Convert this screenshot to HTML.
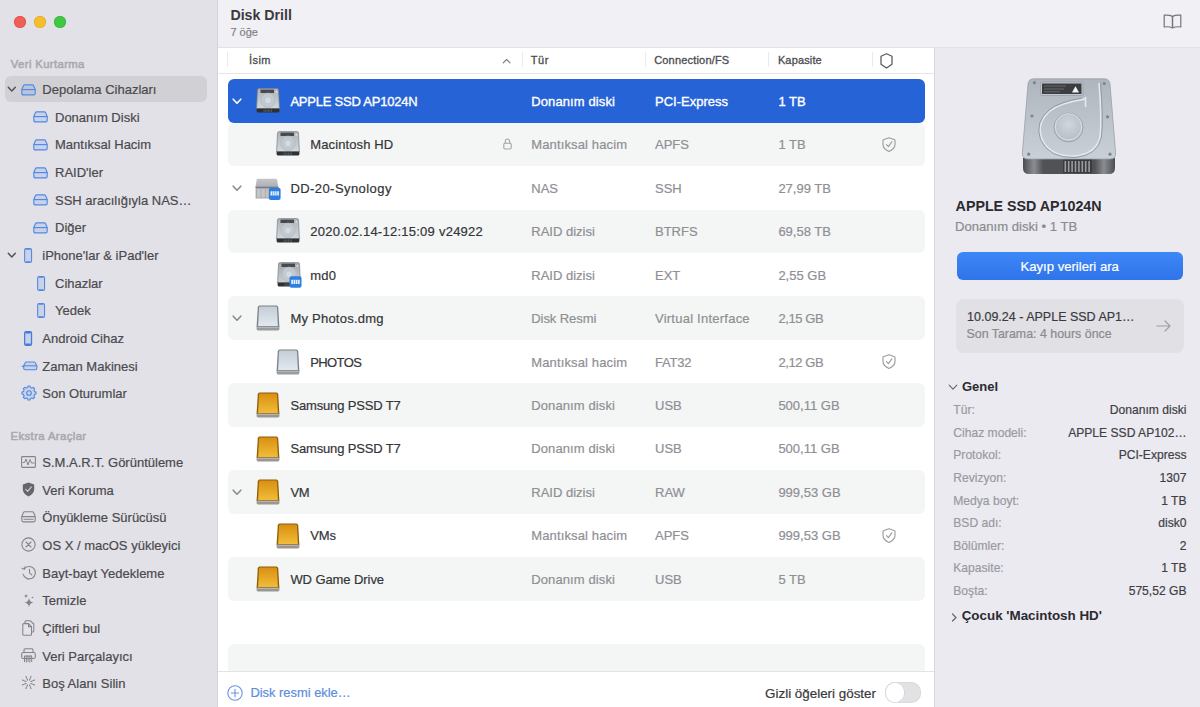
<!DOCTYPE html>
<html><head><meta charset="utf-8"><style>
html,body{margin:0;padding:0}
body{width:1200px;height:707px;overflow:hidden;position:relative;font-family:"Liberation Sans",sans-serif;background:#fff}
.t{position:absolute;white-space:nowrap;line-height:20px}
.r{-webkit-text-stroke:0.2px currentColor}
svg{overflow:visible}
</style></head><body>
<div style="position:absolute;left:0px;top:0px;width:217px;height:707px;background:#e2e1e7"></div>
<div style="position:absolute;left:217px;top:0px;width:1px;height:707px;background:#d3d2d7"></div>
<div style="position:absolute;left:218px;top:0px;width:982px;height:47px;background:#f1f0f5"></div>
<div style="position:absolute;left:218px;top:47px;width:982px;height:1px;background:#e2e1e5"></div>
<div style="position:absolute;left:218px;top:48px;width:716px;height:659px;background:#ffffff"></div>
<div style="position:absolute;left:935px;top:48px;width:265px;height:659px;background:#ebeaf1"></div>
<div style="position:absolute;left:934px;top:48px;width:1px;height:659px;background:#d9d8de"></div>
<div style="position:absolute;left:14px;top:15.5px;width:12px;height:12px;border-radius:50%;background:#ee5f58;box-shadow:inset 0 0 0 0.5px #d8483f"></div>
<div style="position:absolute;left:34px;top:15.5px;width:12px;height:12px;border-radius:50%;background:#f5be2f;box-shadow:inset 0 0 0 0.5px #d9a31f"></div>
<div style="position:absolute;left:54px;top:15.5px;width:12px;height:12px;border-radius:50%;background:#3fc840;box-shadow:inset 0 0 0 0.5px #2ea92f"></div>
<div class="t" style="left:10.80px;top:54.18px;font-size:11.3px;color:#a9a9ae;font-weight:500;-webkit-text-stroke:0.55px currentColor;letter-spacing:0.377px;">Veri Kurtarma</div>
<div style="position:absolute;left:5px;top:75.8px;width:202px;height:26.5px;background:#d1d0d5;border-radius:6px"></div>
<div class="t r" style="left:42.30px;top:80.19px;font-size:13px;color:#4a4a4e;font-weight:400;">Depolama Cihazları</div>
<svg style="position:absolute;left:7.30px;top:86.40px" width="10" height="7" viewBox="0 0 10 7"><path d="M1.3,1.3 L4.8,4.9 L8.3,1.3" fill="none" stroke="#545458" stroke-width="1.5" stroke-linecap="round" stroke-linejoin="round"/></svg>
<svg style="position:absolute;left:21.00px;top:83.60px" width="15" height="12" viewBox="0 0 15 12"><path d="M3.6,0.8 H11.4 Q12.1,0.8 12.5,1.5 L14.2,5.4 V9.3 Q14.2,10.9 12.7,10.9 H2.3 Q0.8,10.9 0.8,9.3 V5.4 L2.5,1.5 Q2.9,0.8 3.6,0.8 Z" fill="rgba(82,137,228,0.16)" stroke="#5289e4" stroke-width="1.15" stroke-linejoin="round"/><path d="M0.8,5.6 H14.2" stroke="#5289e4" stroke-width="1.15"/></svg>
<div class="t r" style="left:55.00px;top:107.83px;font-size:13px;color:#4a4a4e;font-weight:400;">Donanım Diski</div>
<svg style="position:absolute;left:33.40px;top:111.24px" width="15" height="12" viewBox="0 0 15 12"><path d="M3.6,0.8 H11.4 Q12.1,0.8 12.5,1.5 L14.2,5.4 V9.3 Q14.2,10.9 12.7,10.9 H2.3 Q0.8,10.9 0.8,9.3 V5.4 L2.5,1.5 Q2.9,0.8 3.6,0.8 Z" fill="rgba(82,137,228,0.16)" stroke="#5289e4" stroke-width="1.15" stroke-linejoin="round"/><path d="M0.8,5.6 H14.2" stroke="#5289e4" stroke-width="1.15"/></svg>
<div class="t r" style="left:55.00px;top:135.47px;font-size:13px;color:#4a4a4e;font-weight:400;">Mantıksal Hacim</div>
<svg style="position:absolute;left:33.40px;top:138.88px" width="15" height="12" viewBox="0 0 15 12"><path d="M3.6,0.8 H11.4 Q12.1,0.8 12.5,1.5 L14.2,5.4 V9.3 Q14.2,10.9 12.7,10.9 H2.3 Q0.8,10.9 0.8,9.3 V5.4 L2.5,1.5 Q2.9,0.8 3.6,0.8 Z" fill="rgba(82,137,228,0.16)" stroke="#5289e4" stroke-width="1.15" stroke-linejoin="round"/><path d="M0.8,5.6 H14.2" stroke="#5289e4" stroke-width="1.15"/></svg>
<div class="t r" style="left:55.00px;top:163.11px;font-size:13px;color:#4a4a4e;font-weight:400;">RAID'ler</div>
<svg style="position:absolute;left:33.40px;top:166.52px" width="15" height="12" viewBox="0 0 15 12"><path d="M3.6,0.8 H11.4 Q12.1,0.8 12.5,1.5 L14.2,5.4 V9.3 Q14.2,10.9 12.7,10.9 H2.3 Q0.8,10.9 0.8,9.3 V5.4 L2.5,1.5 Q2.9,0.8 3.6,0.8 Z" fill="rgba(82,137,228,0.16)" stroke="#5289e4" stroke-width="1.15" stroke-linejoin="round"/><path d="M0.8,5.6 H14.2" stroke="#5289e4" stroke-width="1.15"/></svg>
<div class="t r" style="left:55.00px;top:190.75px;font-size:13px;color:#4a4a4e;font-weight:400;">SSH aracılığıyla NAS…</div>
<svg style="position:absolute;left:33.40px;top:194.16px" width="15" height="12" viewBox="0 0 15 12"><path d="M3.6,0.8 H11.4 Q12.1,0.8 12.5,1.5 L14.2,5.4 V9.3 Q14.2,10.9 12.7,10.9 H2.3 Q0.8,10.9 0.8,9.3 V5.4 L2.5,1.5 Q2.9,0.8 3.6,0.8 Z" fill="rgba(82,137,228,0.16)" stroke="#5289e4" stroke-width="1.15" stroke-linejoin="round"/><path d="M0.8,5.6 H14.2" stroke="#5289e4" stroke-width="1.15"/></svg>
<div class="t r" style="left:55.00px;top:218.39px;font-size:13px;color:#4a4a4e;font-weight:400;">Diğer</div>
<svg style="position:absolute;left:33.40px;top:221.80px" width="15" height="12" viewBox="0 0 15 12"><path d="M3.6,0.8 H11.4 Q12.1,0.8 12.5,1.5 L14.2,5.4 V9.3 Q14.2,10.9 12.7,10.9 H2.3 Q0.8,10.9 0.8,9.3 V5.4 L2.5,1.5 Q2.9,0.8 3.6,0.8 Z" fill="rgba(82,137,228,0.16)" stroke="#5289e4" stroke-width="1.15" stroke-linejoin="round"/><path d="M0.8,5.6 H14.2" stroke="#5289e4" stroke-width="1.15"/></svg>
<div class="t r" style="left:42.30px;top:246.03px;font-size:13px;color:#4a4a4e;font-weight:400;">iPhone'lar &amp; iPad'ler</div>
<svg style="position:absolute;left:7.30px;top:252.24px" width="10" height="7" viewBox="0 0 10 7"><path d="M1.3,1.3 L4.8,4.9 L8.3,1.3" fill="none" stroke="#545458" stroke-width="1.5" stroke-linecap="round" stroke-linejoin="round"/></svg>
<svg style="position:absolute;left:24.00px;top:248.14px" width="9" height="15" viewBox="0 0 9 15"><rect x="0.65" y="0.65" width="6.9" height="13.7" rx="1.4" fill="rgba(82,137,228,0.16)" stroke="#5289e4" stroke-width="1.1"/><path d="M2,1.4 H6.2 M2,13.6 H6.2" stroke="#5289e4" stroke-width="0.8"/></svg>
<div class="t r" style="left:55.00px;top:273.67px;font-size:13px;color:#4a4a4e;font-weight:400;">Cihazlar</div>
<svg style="position:absolute;left:36.80px;top:275.78px" width="9" height="15" viewBox="0 0 9 15"><rect x="0.65" y="0.65" width="6.9" height="13.7" rx="1.4" fill="rgba(82,137,228,0.16)" stroke="#5289e4" stroke-width="1.1"/><path d="M2,1.4 H6.2 M2,13.6 H6.2" stroke="#5289e4" stroke-width="0.8"/></svg>
<div class="t r" style="left:55.00px;top:301.31px;font-size:13px;color:#4a4a4e;font-weight:400;">Yedek</div>
<svg style="position:absolute;left:36.80px;top:303.42px" width="9" height="15" viewBox="0 0 9 15"><rect x="0.65" y="0.65" width="6.9" height="13.7" rx="1.4" fill="rgba(82,137,228,0.16)" stroke="#5289e4" stroke-width="1.1"/><path d="M2,1.4 H6.2 M2,13.6 H6.2" stroke="#5289e4" stroke-width="0.8"/></svg>
<div class="t r" style="left:42.30px;top:328.95px;font-size:13px;color:#4a4a4e;font-weight:400;">Android Cihaz</div>
<svg style="position:absolute;left:24.00px;top:330.56px" width="9" height="15" viewBox="0 0 9 15"><rect x="0.65" y="0.65" width="6.9" height="13.7" rx="1.4" fill="rgba(82,137,228,0.16)" stroke="#3f7be0" stroke-width="1.25"/><path d="M1.5,1.6 H6.7 M1.5,13.4 H6.7" stroke="#3f7be0" stroke-width="1.6"/></svg>
<div class="t r" style="left:42.30px;top:356.59px;font-size:13px;color:#4a4a4e;font-weight:400;">Zaman Makinesi</div>
<svg style="position:absolute;left:20.60px;top:360.70px" width="17" height="10" viewBox="0 0 17 10"><path d="M5,1 H13 Q13.8,1 14.2,1.7 L15.8,4.6 V7.3 Q15.8,8.8 14.3,8.8 H4.2 Q2.7,8.8 2.7,7.3 V4.6 L4.3,1.7 Q4.7,1 5,1 Z" fill="rgba(82,137,228,0.16)" stroke="#5289e4" stroke-width="1.1" stroke-linejoin="round"/><path d="M2.7,4.8 H15.8" stroke="#5289e4" stroke-width="1.1"/><path d="M0.6,5.4 L2.7,5.4" stroke="#5289e4" stroke-width="1.1"/></svg>
<div class="t r" style="left:42.30px;top:384.23px;font-size:13px;color:#4a4a4e;font-weight:400;">Son Oturumlar</div>
<svg style="position:absolute;left:20.60px;top:385.24px" width="16" height="16" viewBox="0 0 16 16"><path d="M13.53,6.62 L15.03,7.01 L15.03,8.99 L13.53,9.38 L12.89,10.94 L13.67,12.27 L12.27,13.67 L10.94,12.89 L9.38,13.53 L8.99,15.03 L7.01,15.03 L6.62,13.53 L5.06,12.89 L3.73,13.67 L2.33,12.27 L3.11,10.94 L2.47,9.38 L0.97,8.99 L0.97,7.01 L2.47,6.62 L3.11,5.06 L2.33,3.73 L3.73,2.33 L5.06,3.11 L6.62,2.47 L7.01,0.97 L8.99,0.97 L9.38,2.47 L10.94,3.11 L12.27,2.33 L13.67,3.73 L12.89,5.06 Z" fill="rgba(82,137,228,0.16)" stroke="#5289e4" stroke-width="1.1" stroke-linejoin="round"/><circle cx="8" cy="8" r="2.3" fill="none" stroke="#5289e4" stroke-width="1.1"/></svg>
<div class="t" style="left:10.60px;top:426.48px;font-size:11.3px;color:#a9a9ae;font-weight:500;-webkit-text-stroke:0.55px currentColor;letter-spacing:0.398px;">Ekstra Araçlar</div>
<div class="t r" style="left:42.30px;top:453.19px;font-size:13px;color:#4a4a4e;font-weight:400;">S.M.A.R.T. Görüntüleme</div>
<svg style="position:absolute;left:21.00px;top:456.00px" width="15" height="12" viewBox="0 0 15 12"><rect x="0.6" y="0.6" width="13.8" height="10.8" rx="0.8" fill="none" stroke="#848489" stroke-width="1.1"/><path d="M1.5,6.5 L3.5,6.5 L5,3 L7,9 L9,3.5 L10.5,7 L13.5,7" fill="none" stroke="#848489" stroke-width="1" stroke-linejoin="round"/></svg>
<div class="t r" style="left:42.30px;top:480.81px;font-size:13px;color:#4a4a4e;font-weight:400;">Veri Koruma</div>
<svg style="position:absolute;left:22.00px;top:482.12px" width="13" height="15" viewBox="0 0 13 15"><path d="M6.5,0.6 L12.2,2.6 V7.2 Q12.2,11.8 6.5,14.4 Q0.8,11.8 0.8,7.2 V2.6 Z" fill="#66666a"/><path d="M3.8,7.4 L5.7,9.4 L9.3,4.9" fill="none" stroke="#c8c8cc" stroke-width="1.3" stroke-linecap="round" stroke-linejoin="round"/></svg>
<div class="t r" style="left:42.30px;top:508.43px;font-size:13px;color:#4a4a4e;font-weight:400;">Önyükleme Sürücüsü</div>
<svg style="position:absolute;left:21.00px;top:511.24px" width="15" height="12" viewBox="0 0 15 12"><path d="M3.6,0.8 H11.4 Q12.1,0.8 12.5,1.5 L14.2,5.4 V9.3 Q14.2,10.9 12.7,10.9 H2.3 Q0.8,10.9 0.8,9.3 V5.4 L2.5,1.5 Q2.9,0.8 3.6,0.8 Z" fill="none" stroke="#848489" stroke-width="1.1" stroke-linejoin="round"/><path d="M0.8,5.6 H14.2 M2.5,8.2 H12.5" stroke="#848489" stroke-width="1.1"/></svg>
<div class="t r" style="left:42.30px;top:536.05px;font-size:13px;color:#4a4a4e;font-weight:400;">OS X / macOS yükleyici</div>
<svg style="position:absolute;left:21.00px;top:537.36px" width="15" height="15" viewBox="0 0 15 15"><circle cx="7.5" cy="7.5" r="6.6" fill="none" stroke="#848489" stroke-width="1.1"/><path d="M5,5 L10,10 M10,5 L5,10" stroke="#848489" stroke-width="1.1" stroke-linecap="round"/></svg>
<div class="t r" style="left:42.30px;top:563.67px;font-size:13px;color:#4a4a4e;font-weight:400;">Bayt-bayt Yedekleme</div>
<svg style="position:absolute;left:20.50px;top:564.98px" width="16" height="15" viewBox="0 0 16 15"><path d="M3.2,4 A6.2,6.2 0 1 1 2.2,9.3" fill="none" stroke="#848489" stroke-width="1.1" stroke-linecap="round"/><path d="M1,3.2 L3.3,4.3 L4.2,1.8" fill="none" stroke="#848489" stroke-width="1.1" stroke-linecap="round" stroke-linejoin="round"/><path d="M8.5,4.3 V7.8 L10.8,9.8" fill="none" stroke="#848489" stroke-width="1.1" stroke-linecap="round"/></svg>
<div class="t r" style="left:42.30px;top:591.29px;font-size:13px;color:#4a4a4e;font-weight:400;">Temizle</div>
<svg style="position:absolute;left:21.50px;top:592.60px" width="14" height="15" viewBox="0 0 14 15"><path d="M7,5 Q7.6,9 11.5,9.6 Q7.6,10.2 7,14.2 Q6.4,10.2 2.5,9.6 Q6.4,9 7,5 Z" fill="#848489"/><path d="M4,1 Q4.3,2.7 5.8,3 Q4.3,3.3 4,5 Q3.7,3.3 2.2,3 Q3.7,2.7 4,1 Z" fill="#848489"/><circle cx="10.5" cy="4.5" r="0.8" fill="#848489"/></svg>
<div class="t r" style="left:42.30px;top:618.91px;font-size:13px;color:#4a4a4e;font-weight:400;">Çiftleri bul</div>
<svg style="position:absolute;left:21.50px;top:619.72px" width="14" height="16" viewBox="0 0 14 16"><path d="M3,3.5 V1.8 Q3,0.8 4,0.8 H8.5 L11.8,4 V11 Q11.8,12 10.8,12 H9.5" fill="none" stroke="#848489" stroke-width="1.05" stroke-linejoin="round"/><path d="M1.8,3.6 H6.5 L9.5,6.6 V14.2 Q9.5,15.2 8.5,15.2 H1.8 Q0.8,15.2 0.8,14.2 V4.6 Q0.8,3.6 1.8,3.6 Z" fill="#e4e3e8" stroke="#848489" stroke-width="1.05" stroke-linejoin="round"/><path d="M6.5,3.6 V6.6 H9.5" fill="none" stroke="#848489" stroke-width="1.05"/></svg>
<div class="t r" style="left:42.30px;top:646.53px;font-size:13px;color:#4a4a4e;font-weight:400;">Veri Parçalayıcı</div>
<svg style="position:absolute;left:21.00px;top:647.84px" width="15" height="15" viewBox="0 0 15 15"><path d="M3,5 V1.8 Q3,0.8 4,0.8 H11 Q12,0.8 12,1.8 V5" fill="none" stroke="#848489" stroke-width="1.1"/><rect x="0.7" y="4.5" width="13.6" height="6" rx="1.5" fill="none" stroke="#848489" stroke-width="1.1"/><path d="M3.5,8 V14 M5.3,8 V14.5 M7.1,8 V14 M8.9,8 V14.5 M10.7,8 V14" stroke="#848489" stroke-width="1"/><path d="M3.5,8 H11" stroke="#848489" stroke-width="1.1"/></svg>
<div class="t r" style="left:42.30px;top:674.15px;font-size:13px;color:#4a4a4e;font-weight:400;">Boş Alanı Silin</div>
<svg style="position:absolute;left:21.00px;top:675.46px" width="15" height="15" viewBox="0 0 15 15"><path d="M9.90,8.49 L13.60,10.03" stroke="#848489" stroke-width="1.1" stroke-linecap="round" stroke-dasharray="1.6 1.2"/><path d="M8.49,9.90 L10.03,13.60" stroke="#848489" stroke-width="1.1" stroke-linecap="round" stroke-dasharray="1.6 1.2"/><path d="M6.51,9.90 L4.97,13.60" stroke="#848489" stroke-width="1.1" stroke-linecap="round" stroke-dasharray="1.6 1.2"/><path d="M5.10,8.49 L1.40,10.03" stroke="#848489" stroke-width="1.1" stroke-linecap="round" stroke-dasharray="1.6 1.2"/><path d="M5.10,6.51 L1.40,4.97" stroke="#848489" stroke-width="1.1" stroke-linecap="round" stroke-dasharray="1.6 1.2"/><path d="M6.51,5.10 L4.97,1.40" stroke="#848489" stroke-width="1.1" stroke-linecap="round" stroke-dasharray="1.6 1.2"/><path d="M8.49,5.10 L10.03,1.40" stroke="#848489" stroke-width="1.1" stroke-linecap="round" stroke-dasharray="1.6 1.2"/><path d="M9.90,6.51 L13.60,4.97" stroke="#848489" stroke-width="1.1" stroke-linecap="round" stroke-dasharray="1.6 1.2"/></svg>
<div class="t" style="left:230.40px;top:5.08px;font-size:14.2px;color:#3a3a3e;font-weight:700;">Disk Drill</div>
<div class="t r" style="left:230.40px;top:21.59px;font-size:11px;color:#808085;font-weight:400;">7 öğe</div>
<div style="position:absolute;left:218px;top:73px;width:716px;height:1px;background:#e6e6e8"></div>
<div class="t" style="left:249.00px;top:49.94px;font-size:11px;color:#4d4d51;font-weight:500;-webkit-text-stroke:0.32px currentColor;letter-spacing:0.446px;">İsim</div>
<div class="t" style="left:530.80px;top:49.94px;font-size:11px;color:#4d4d51;font-weight:500;-webkit-text-stroke:0.32px currentColor;letter-spacing:0.501px;">Tür</div>
<div class="t" style="left:654.20px;top:49.94px;font-size:11px;color:#4d4d51;font-weight:500;-webkit-text-stroke:0.32px currentColor;letter-spacing:0.187px;">Connection/FS</div>
<div class="t" style="left:777.90px;top:49.94px;font-size:11px;color:#4d4d51;font-weight:500;-webkit-text-stroke:0.32px currentColor;letter-spacing:0.142px;">Kapasite</div>
<div style="position:absolute;left:227px;top:52px;width:1px;height:15px;background:#eaeaec"></div>
<div style="position:absolute;left:521.5px;top:52px;width:1px;height:15px;background:#eaeaec"></div>
<div style="position:absolute;left:645px;top:52px;width:1px;height:15px;background:#eaeaec"></div>
<div style="position:absolute;left:768px;top:52px;width:1px;height:15px;background:#eaeaec"></div>
<div style="position:absolute;left:871.5px;top:52px;width:1px;height:15px;background:#eaeaec"></div>
<svg style="position:absolute;left:501.80px;top:58.00px" width="9" height="6" viewBox="0 0 9 6"><path d="M1.2,4.9 L4.6,1.5 L8,4.9" fill="none" stroke="#7e7e82" stroke-width="1.15" stroke-linecap="round" stroke-linejoin="round"/></svg>
<svg style="position:absolute;left:880.20px;top:52.60px" width="13" height="16" viewBox="0 0 13 16"><path d="M6.5,0.8 L12,3.3 V11.3 L6.5,15 L1,11.3 V3.3 Z" fill="none" stroke="#5a5a5e" stroke-width="1.25" stroke-linejoin="round"/></svg>
<svg style="position:absolute;left:1162.50px;top:13.80px" width="19" height="15" viewBox="0 0 19 15"><path d="M9.5,2.4 Q6,0.6 1.2,1.2 V13 Q6,12.2 9.5,14 Q13,12.2 17.8,13 V1.2 Q13,0.6 9.5,2.4 Z" fill="none" stroke="#76767a" stroke-width="1.2" stroke-linejoin="round"/><path d="M9.5,2.4 V14" stroke="#76767a" stroke-width="1.5"/></svg>
<div style="position:absolute;left:228px;top:79.2px;width:696.5px;height:43.45px;background:#2563d7;border-radius:6px"></div>
<div style="position:absolute;left:228px;top:122.65px;width:696.5px;height:43.45px;background:#f4f5f5;border-radius:6px"></div>
<div style="position:absolute;left:228px;top:209.55px;width:696.5px;height:43.45px;background:#f4f5f5;border-radius:6px"></div>
<div style="position:absolute;left:228px;top:296.45px;width:696.5px;height:43.45px;background:#f4f5f5;border-radius:6px"></div>
<div style="position:absolute;left:228px;top:383.35px;width:696.5px;height:43.45px;background:#f4f5f5;border-radius:6px"></div>
<div style="position:absolute;left:228px;top:470.25px;width:696.5px;height:43.45px;background:#f4f5f5;border-radius:6px"></div>
<div style="position:absolute;left:228px;top:557.1500000000001px;width:696.5px;height:43.45px;background:#f4f5f5;border-radius:6px"></div>
<div style="position:absolute;left:228px;top:644.0500000000001px;width:696.5px;height:26.949999999999932px;background:#f4f5f5;border-radius:6px 6px 0 0"></div>
<div class="t r" style="left:290.40px;top:91.82px;font-size:13px;color:#ffffff;font-weight:400;-webkit-text-stroke:0.35px currentColor;letter-spacing:-0.218px;">APPLE SSD AP1024N</div>
<svg style="position:absolute;left:231.50px;top:97.93px" width="10" height="7" viewBox="0 0 10 7"><path d="M1.2,1.2 L5,5.2 L8.8,1.2" fill="none" stroke="#ffffff" stroke-width="1.6" stroke-linecap="round" stroke-linejoin="round"/></svg>
<svg style="position:absolute;left:256.00px;top:87.73px" width="24" height="25" viewBox="0 0 24 25"><defs><linearGradient id="hdg0" x1="0" y1="0" x2="0" y2="1"><stop offset="0" stop-color="#aeb3b9"/><stop offset="1" stop-color="#d3d8dd"/></linearGradient></defs><path d="M3.2,0.6 H20.8 Q22.3,0.6 22.5,2 L23.4,20.8 H0.6 L1.5,2 Q1.7,0.6 3.2,0.6 Z" fill="url(#hdg0)" stroke="#7d8186" stroke-width="0.7"/><rect x="4.5" y="1.6" width="13.5" height="3.4" fill="#47494e"/><path d="M19.2,4.6 L20.4,2.5 L21.6,4.6 Z" fill="#e6e9ec"/><circle cx="12" cy="12.3" r="7.2" fill="#c2c9cf" stroke="#b3bac1" stroke-width="0.8"/><circle cx="12" cy="12.3" r="2.8" fill="#d3dbe3"/><path d="M0.6,20.4 H23.4 V23 Q23.4,24.6 21.8,24.6 H2.2 Q0.6,24.6 0.6,23 Z" fill="#2f3033"/><path d="M8,21.4 V24 M9.5,21.4 V24 M11,21.4 V24 M12.5,21.4 V24 M14,21.4 V24 M15.5,21.4 V24" stroke="#5f6165" stroke-width="0.7"/></svg>
<div class="t r" style="left:531.30px;top:91.82px;font-size:13px;color:#ffffff;font-weight:400;-webkit-text-stroke:0.35px currentColor;letter-spacing:0.103px;">Donanım diski</div>
<div class="t r" style="left:655.00px;top:91.82px;font-size:13px;color:#ffffff;font-weight:400;-webkit-text-stroke:0.35px currentColor;">PCI-Express</div>
<div class="t r" style="left:778.40px;top:91.82px;font-size:13px;color:#ffffff;font-weight:400;-webkit-text-stroke:0.35px currentColor;">1 TB</div>
<div class="t r" style="left:310.30px;top:135.27px;font-size:13px;color:#353539;font-weight:400;letter-spacing:0.106px;">Macintosh HD</div>
<svg style="position:absolute;left:276.00px;top:131.18px" width="24" height="25" viewBox="0 0 24 25"><defs><linearGradient id="hdg1" x1="0" y1="0" x2="0" y2="1"><stop offset="0" stop-color="#aeb3b9"/><stop offset="1" stop-color="#d3d8dd"/></linearGradient></defs><path d="M3.2,0.6 H20.8 Q22.3,0.6 22.5,2 L23.4,20.8 H0.6 L1.5,2 Q1.7,0.6 3.2,0.6 Z" fill="url(#hdg1)" stroke="#7d8186" stroke-width="0.7"/><rect x="4.5" y="1.6" width="13.5" height="3.4" fill="#47494e"/><path d="M19.2,4.6 L20.4,2.5 L21.6,4.6 Z" fill="#e6e9ec"/><circle cx="12" cy="12.3" r="7.2" fill="#c2c9cf" stroke="#b3bac1" stroke-width="0.8"/><circle cx="12" cy="12.3" r="2.8" fill="#d3dbe3"/><path d="M0.6,20.4 H23.4 V23 Q23.4,24.6 21.8,24.6 H2.2 Q0.6,24.6 0.6,23 Z" fill="#2f3033"/><path d="M8,21.4 V24 M9.5,21.4 V24 M11,21.4 V24 M12.5,21.4 V24 M14,21.4 V24 M15.5,21.4 V24" stroke="#5f6165" stroke-width="0.7"/></svg>
<svg style="position:absolute;left:502.80px;top:138.18px" width="9" height="12" viewBox="0 0 9 12"><path d="M2.3,5.3 V3.6 Q2.3,1 4.5,1 Q6.7,1 6.7,3.6 V5.3" fill="none" stroke="#a3a3a6" stroke-width="1.1"/><rect x="0.8" y="5.2" width="7.4" height="5.8" rx="1.2" fill="none" stroke="#a3a3a6" stroke-width="1.1"/></svg>
<svg style="position:absolute;left:881.80px;top:136.78px" width="14" height="15" viewBox="0 0 14 15"><path d="M7,0.8 L12.6,2.8 Q13,2.95 13,3.4 V7.4 Q13,11.6 7,14.4 Q1,11.6 1,7.4 V3.4 Q1,2.95 1.4,2.8 Z" fill="none" stroke="#9d9da1" stroke-width="1.15" stroke-linejoin="round"/><path d="M4.5,7.6 L6.4,9.6 L9.8,4.8" fill="none" stroke="#9d9da1" stroke-width="1.15" stroke-linecap="round" stroke-linejoin="round"/></svg>
<div class="t r" style="left:531.30px;top:135.27px;font-size:13px;color:#8f8f94;font-weight:400;letter-spacing:0.127px;">Mantıksal hacim</div>
<div class="t r" style="left:655.00px;top:135.27px;font-size:13px;color:#8f8f94;font-weight:400;">APFS</div>
<div class="t r" style="left:778.40px;top:135.27px;font-size:13px;color:#8f8f94;font-weight:400;">1 TB</div>
<div class="t r" style="left:290.40px;top:178.72px;font-size:13px;color:#353539;font-weight:400;letter-spacing:0.433px;">DD-20-Synology</div>
<svg style="position:absolute;left:231.50px;top:184.83px" width="10" height="7" viewBox="0 0 10 7"><path d="M1.2,1.2 L5,5.2 L8.8,1.2" fill="none" stroke="#8a8a8e" stroke-width="1.6" stroke-linecap="round" stroke-linejoin="round"/></svg>
<svg style="position:absolute;left:255.40px;top:178.43px" width="27" height="24" viewBox="0 0 27 24"><defs><linearGradient id="nsg2" x1="0" y1="0" x2="0" y2="1"><stop offset="0" stop-color="#c3c7cb"/><stop offset="1" stop-color="#aeb2b6"/></linearGradient></defs><path d="M3,0.8 H20.5 Q21.8,0.8 22.1,2 L23.3,8.5 H0.6 L1.6,2 Q1.9,0.8 3,0.8 Z" fill="url(#nsg2)"/><rect x="0.6" y="8.5" width="22.7" height="12" fill="#a6a8ab"/><rect x="0.6" y="8.5" width="22.7" height="1.5" fill="#7b7d80"/><rect x="2" y="11" width="3.5" height="8.5" fill="#c2c6ca"/><rect x="6.3" y="11" width="3.5" height="8.5" fill="#c2c6ca"/><rect x="10.6" y="11" width="3.5" height="8.5" fill="#c8c2bc"/><rect x="13.8" y="9.7" width="11.8" height="12.3" rx="2" fill="#2f7fe3"/><rect x="15.5" y="13.3" width="8.4" height="4.2" fill="#e9f2fd"/><path d="M17.6,13.3 V17.5 M19.7,13.3 V17.5 M21.8,13.3 V17.5" stroke="#2f7fe3" stroke-width="0.6"/></svg>
<div class="t r" style="left:531.30px;top:178.72px;font-size:13px;color:#8f8f94;font-weight:400;">NAS</div>
<div class="t r" style="left:655.00px;top:178.72px;font-size:13px;color:#8f8f94;font-weight:400;">SSH</div>
<div class="t r" style="left:778.40px;top:178.72px;font-size:13px;color:#8f8f94;font-weight:400;">27,99 TB</div>
<div class="t r" style="left:310.30px;top:222.17px;font-size:13px;color:#353539;font-weight:400;letter-spacing:0.250px;">2020.02.14-12:15:09 v24922</div>
<svg style="position:absolute;left:276.00px;top:218.08px" width="24" height="25" viewBox="0 0 24 25"><defs><linearGradient id="hdg3" x1="0" y1="0" x2="0" y2="1"><stop offset="0" stop-color="#aeb3b9"/><stop offset="1" stop-color="#d3d8dd"/></linearGradient></defs><path d="M3.2,0.6 H20.8 Q22.3,0.6 22.5,2 L23.4,20.8 H0.6 L1.5,2 Q1.7,0.6 3.2,0.6 Z" fill="url(#hdg3)" stroke="#7d8186" stroke-width="0.7"/><rect x="4.5" y="1.6" width="13.5" height="3.4" fill="#47494e"/><path d="M19.2,4.6 L20.4,2.5 L21.6,4.6 Z" fill="#e6e9ec"/><circle cx="12" cy="12.3" r="7.2" fill="#c2c9cf" stroke="#b3bac1" stroke-width="0.8"/><circle cx="12" cy="12.3" r="2.8" fill="#d3dbe3"/><path d="M0.6,20.4 H23.4 V23 Q23.4,24.6 21.8,24.6 H2.2 Q0.6,24.6 0.6,23 Z" fill="#2f3033"/><path d="M8,21.4 V24 M9.5,21.4 V24 M11,21.4 V24 M12.5,21.4 V24 M14,21.4 V24 M15.5,21.4 V24" stroke="#5f6165" stroke-width="0.7"/></svg>
<div class="t r" style="left:531.30px;top:222.17px;font-size:13px;color:#8f8f94;font-weight:400;">RAID dizisi</div>
<div class="t r" style="left:655.00px;top:222.17px;font-size:13px;color:#8f8f94;font-weight:400;">BTRFS</div>
<div class="t r" style="left:778.40px;top:222.17px;font-size:13px;color:#8f8f94;font-weight:400;">69,58 TB</div>
<div class="t r" style="left:310.30px;top:265.62px;font-size:13px;color:#353539;font-weight:400;letter-spacing:0.205px;">md0</div>
<svg style="position:absolute;left:277.00px;top:261.73px" width="26" height="26" viewBox="0 0 26 26"><defs><linearGradient id="hdg4" x1="0" y1="0" x2="0" y2="1"><stop offset="0" stop-color="#a3a8ae"/><stop offset="1" stop-color="#c9cfd4"/></linearGradient></defs><path d="M3.2,0.6 H20.8 Q22.3,0.6 22.5,2 L23.4,20.8 H0.6 L1.5,2 Q1.7,0.6 3.2,0.6 Z" fill="url(#hdg4)" stroke="#7d8186" stroke-width="0.7"/><rect x="4.5" y="1.6" width="13.5" height="3.4" fill="#47494e"/><path d="M19.2,4.6 L20.4,2.5 L21.6,4.6 Z" fill="#e6e9ec"/><circle cx="12" cy="12.3" r="7.2" fill="#c2c9cf" stroke="#b3bac1" stroke-width="0.8"/><circle cx="12" cy="12.3" r="2.8" fill="#d3dbe3"/><path d="M0.6,20.4 H23.4 V23 Q23.4,24.6 21.8,24.6 H2.2 Q0.6,24.6 0.6,23 Z" fill="#2f3033"/><path d="M8,21.4 V24 M9.5,21.4 V24 M11,21.4 V24 M12.5,21.4 V24 M14,21.4 V24 M15.5,21.4 V24" stroke="#5f6165" stroke-width="0.7"/><rect x="12.5" y="14.2" width="12" height="11.5" rx="2" fill="#2f7fe3"/><rect x="14.3" y="17.8" width="8.4" height="4.2" fill="#e9f2fd"/><path d="M16.4,17.8 V22.0 M18.5,17.8 V22.0 M20.6,17.8 V22.0" stroke="#2f7fe3" stroke-width="0.6"/></svg>
<div class="t r" style="left:531.30px;top:265.62px;font-size:13px;color:#8f8f94;font-weight:400;">RAID dizisi</div>
<div class="t r" style="left:655.00px;top:265.62px;font-size:13px;color:#8f8f94;font-weight:400;">EXT</div>
<div class="t r" style="left:778.40px;top:265.62px;font-size:13px;color:#8f8f94;font-weight:400;">2,55 GB</div>
<div class="t r" style="left:290.40px;top:309.07px;font-size:13px;color:#353539;font-weight:400;letter-spacing:0.232px;">My Photos.dmg</div>
<svg style="position:absolute;left:231.50px;top:315.18px" width="10" height="7" viewBox="0 0 10 7"><path d="M1.2,1.2 L5,5.2 L8.8,1.2" fill="none" stroke="#8a8a8e" stroke-width="1.6" stroke-linecap="round" stroke-linejoin="round"/></svg>
<svg style="position:absolute;left:256.00px;top:305.28px" width="24" height="26" viewBox="0 0 24 26"><defs><linearGradient id="edg5" x1="0" y1="0" x2="0" y2="1"><stop offset="0" stop-color="#c4ced7"/><stop offset="1" stop-color="#e1e9ef"/></linearGradient></defs><path d="M3.6,0.6 H20.4 Q22,0.6 22.2,2.2 L23.4,22 H0.6 L1.8,2.2 Q2,0.6 3.6,0.6 Z" fill="#7c8187"/><path d="M4.2,1.4 H19.8 Q20.9,1.4 21,2.5 L21.9,21 H2.1 L3,2.5 Q3.1,1.4 4.2,1.4 Z" fill="url(#edg5)"/><path d="M0.6,21.6 H23.4 V24 Q23.4,25.4 22,25.4 H2 Q0.6,25.4 0.6,24 Z" fill="#9a9c9f"/><path d="M1.5,22.4 H22.5" stroke="#c4c6c8" stroke-width="0.7"/></svg>
<div class="t r" style="left:531.30px;top:309.07px;font-size:13px;color:#8f8f94;font-weight:400;letter-spacing:-0.080px;">Disk Resmi</div>
<div class="t r" style="left:655.00px;top:309.07px;font-size:13px;color:#8f8f94;font-weight:400;letter-spacing:0.237px;">Virtual Interface</div>
<div class="t r" style="left:778.40px;top:309.07px;font-size:13px;color:#8f8f94;font-weight:400;letter-spacing:-0.399px;">2,15 GB</div>
<div class="t r" style="left:310.30px;top:352.52px;font-size:13px;color:#353539;font-weight:400;letter-spacing:-0.632px;">PHOTOS</div>
<svg style="position:absolute;left:276.00px;top:348.73px" width="24" height="26" viewBox="0 0 24 26"><defs><linearGradient id="edg6" x1="0" y1="0" x2="0" y2="1"><stop offset="0" stop-color="#c4ced7"/><stop offset="1" stop-color="#e1e9ef"/></linearGradient></defs><path d="M3.6,0.6 H20.4 Q22,0.6 22.2,2.2 L23.4,22 H0.6 L1.8,2.2 Q2,0.6 3.6,0.6 Z" fill="#7c8187"/><path d="M4.2,1.4 H19.8 Q20.9,1.4 21,2.5 L21.9,21 H2.1 L3,2.5 Q3.1,1.4 4.2,1.4 Z" fill="url(#edg6)"/><path d="M0.6,21.6 H23.4 V24 Q23.4,25.4 22,25.4 H2 Q0.6,25.4 0.6,24 Z" fill="#9a9c9f"/><path d="M1.5,22.4 H22.5" stroke="#c4c6c8" stroke-width="0.7"/></svg>
<svg style="position:absolute;left:881.80px;top:354.03px" width="14" height="15" viewBox="0 0 14 15"><path d="M7,0.8 L12.6,2.8 Q13,2.95 13,3.4 V7.4 Q13,11.6 7,14.4 Q1,11.6 1,7.4 V3.4 Q1,2.95 1.4,2.8 Z" fill="none" stroke="#9d9da1" stroke-width="1.15" stroke-linejoin="round"/><path d="M4.5,7.6 L6.4,9.6 L9.8,4.8" fill="none" stroke="#9d9da1" stroke-width="1.15" stroke-linecap="round" stroke-linejoin="round"/></svg>
<div class="t r" style="left:531.30px;top:352.52px;font-size:13px;color:#8f8f94;font-weight:400;letter-spacing:0.127px;">Mantıksal hacim</div>
<div class="t r" style="left:655.00px;top:352.52px;font-size:13px;color:#8f8f94;font-weight:400;letter-spacing:-0.182px;">FAT32</div>
<div class="t r" style="left:778.40px;top:352.52px;font-size:13px;color:#8f8f94;font-weight:400;letter-spacing:-0.399px;">2,12 GB</div>
<div class="t r" style="left:290.40px;top:395.97px;font-size:13px;color:#353539;font-weight:400;letter-spacing:-0.156px;">Samsung PSSD T7</div>
<svg style="position:absolute;left:256.00px;top:392.18px" width="24" height="26" viewBox="0 0 24 26"><defs><linearGradient id="edg7" x1="0" y1="0" x2="0" y2="1"><stop offset="0" stop-color="#d98f12"/><stop offset="1" stop-color="#f0bd38"/></linearGradient></defs><path d="M3.6,0.6 H20.4 Q22,0.6 22.2,2.2 L23.4,22 H0.6 L1.8,2.2 Q2,0.6 3.6,0.6 Z" fill="#8f5d0a"/><path d="M4.2,1.4 H19.8 Q20.9,1.4 21,2.5 L21.9,21 H2.1 L3,2.5 Q3.1,1.4 4.2,1.4 Z" fill="url(#edg7)"/><path d="M0.6,21.6 H23.4 V24 Q23.4,25.4 22,25.4 H2 Q0.6,25.4 0.6,24 Z" fill="#9a9792"/><path d="M1.5,22.4 H22.5" stroke="#c9c5bd" stroke-width="0.7"/></svg>
<div class="t r" style="left:531.30px;top:395.97px;font-size:13px;color:#8f8f94;font-weight:400;letter-spacing:0.103px;">Donanım diski</div>
<div class="t r" style="left:655.00px;top:395.97px;font-size:13px;color:#8f8f94;font-weight:400;">USB</div>
<div class="t r" style="left:778.40px;top:395.97px;font-size:13px;color:#8f8f94;font-weight:400;">500,11 GB</div>
<div class="t r" style="left:290.40px;top:439.42px;font-size:13px;color:#353539;font-weight:400;letter-spacing:-0.156px;">Samsung PSSD T7</div>
<svg style="position:absolute;left:256.00px;top:435.63px" width="24" height="26" viewBox="0 0 24 26"><defs><linearGradient id="edg8" x1="0" y1="0" x2="0" y2="1"><stop offset="0" stop-color="#d98f12"/><stop offset="1" stop-color="#f0bd38"/></linearGradient></defs><path d="M3.6,0.6 H20.4 Q22,0.6 22.2,2.2 L23.4,22 H0.6 L1.8,2.2 Q2,0.6 3.6,0.6 Z" fill="#8f5d0a"/><path d="M4.2,1.4 H19.8 Q20.9,1.4 21,2.5 L21.9,21 H2.1 L3,2.5 Q3.1,1.4 4.2,1.4 Z" fill="url(#edg8)"/><path d="M0.6,21.6 H23.4 V24 Q23.4,25.4 22,25.4 H2 Q0.6,25.4 0.6,24 Z" fill="#9a9792"/><path d="M1.5,22.4 H22.5" stroke="#c9c5bd" stroke-width="0.7"/></svg>
<div class="t r" style="left:531.30px;top:439.42px;font-size:13px;color:#8f8f94;font-weight:400;letter-spacing:0.103px;">Donanım diski</div>
<div class="t r" style="left:655.00px;top:439.42px;font-size:13px;color:#8f8f94;font-weight:400;">USB</div>
<div class="t r" style="left:778.40px;top:439.42px;font-size:13px;color:#8f8f94;font-weight:400;">500,11 GB</div>
<div class="t r" style="left:290.40px;top:482.87px;font-size:13px;color:#353539;font-weight:400;letter-spacing:-0.400px;">VM</div>
<svg style="position:absolute;left:231.50px;top:488.98px" width="10" height="7" viewBox="0 0 10 7"><path d="M1.2,1.2 L5,5.2 L8.8,1.2" fill="none" stroke="#8a8a8e" stroke-width="1.6" stroke-linecap="round" stroke-linejoin="round"/></svg>
<svg style="position:absolute;left:256.00px;top:479.08px" width="24" height="26" viewBox="0 0 24 26"><defs><linearGradient id="edg9" x1="0" y1="0" x2="0" y2="1"><stop offset="0" stop-color="#d98f12"/><stop offset="1" stop-color="#f0bd38"/></linearGradient></defs><path d="M3.6,0.6 H20.4 Q22,0.6 22.2,2.2 L23.4,22 H0.6 L1.8,2.2 Q2,0.6 3.6,0.6 Z" fill="#8f5d0a"/><path d="M4.2,1.4 H19.8 Q20.9,1.4 21,2.5 L21.9,21 H2.1 L3,2.5 Q3.1,1.4 4.2,1.4 Z" fill="url(#edg9)"/><path d="M0.6,21.6 H23.4 V24 Q23.4,25.4 22,25.4 H2 Q0.6,25.4 0.6,24 Z" fill="#9a9792"/><path d="M1.5,22.4 H22.5" stroke="#c9c5bd" stroke-width="0.7"/></svg>
<div class="t r" style="left:531.30px;top:482.87px;font-size:13px;color:#8f8f94;font-weight:400;">RAID dizisi</div>
<div class="t r" style="left:655.00px;top:482.87px;font-size:13px;color:#8f8f94;font-weight:400;">RAW</div>
<div class="t r" style="left:778.40px;top:482.87px;font-size:13px;color:#8f8f94;font-weight:400;">999,53 GB</div>
<div class="t r" style="left:310.30px;top:526.32px;font-size:13px;color:#353539;font-weight:400;letter-spacing:-0.100px;">VMs</div>
<svg style="position:absolute;left:276.00px;top:522.53px" width="24" height="26" viewBox="0 0 24 26"><defs><linearGradient id="edg10" x1="0" y1="0" x2="0" y2="1"><stop offset="0" stop-color="#d98f12"/><stop offset="1" stop-color="#f0bd38"/></linearGradient></defs><path d="M3.6,0.6 H20.4 Q22,0.6 22.2,2.2 L23.4,22 H0.6 L1.8,2.2 Q2,0.6 3.6,0.6 Z" fill="#8f5d0a"/><path d="M4.2,1.4 H19.8 Q20.9,1.4 21,2.5 L21.9,21 H2.1 L3,2.5 Q3.1,1.4 4.2,1.4 Z" fill="url(#edg10)"/><path d="M0.6,21.6 H23.4 V24 Q23.4,25.4 22,25.4 H2 Q0.6,25.4 0.6,24 Z" fill="#9a9792"/><path d="M1.5,22.4 H22.5" stroke="#c9c5bd" stroke-width="0.7"/></svg>
<svg style="position:absolute;left:881.80px;top:527.83px" width="14" height="15" viewBox="0 0 14 15"><path d="M7,0.8 L12.6,2.8 Q13,2.95 13,3.4 V7.4 Q13,11.6 7,14.4 Q1,11.6 1,7.4 V3.4 Q1,2.95 1.4,2.8 Z" fill="none" stroke="#9d9da1" stroke-width="1.15" stroke-linejoin="round"/><path d="M4.5,7.6 L6.4,9.6 L9.8,4.8" fill="none" stroke="#9d9da1" stroke-width="1.15" stroke-linecap="round" stroke-linejoin="round"/></svg>
<div class="t r" style="left:531.30px;top:526.32px;font-size:13px;color:#8f8f94;font-weight:400;letter-spacing:0.127px;">Mantıksal hacim</div>
<div class="t r" style="left:655.00px;top:526.32px;font-size:13px;color:#8f8f94;font-weight:400;">APFS</div>
<div class="t r" style="left:778.40px;top:526.32px;font-size:13px;color:#8f8f94;font-weight:400;">999,53 GB</div>
<div class="t r" style="left:290.40px;top:569.77px;font-size:13px;color:#353539;font-weight:400;letter-spacing:-0.077px;">WD Game Drive</div>
<svg style="position:absolute;left:256.00px;top:565.98px" width="24" height="26" viewBox="0 0 24 26"><defs><linearGradient id="edg11" x1="0" y1="0" x2="0" y2="1"><stop offset="0" stop-color="#d98f12"/><stop offset="1" stop-color="#f0bd38"/></linearGradient></defs><path d="M3.6,0.6 H20.4 Q22,0.6 22.2,2.2 L23.4,22 H0.6 L1.8,2.2 Q2,0.6 3.6,0.6 Z" fill="#8f5d0a"/><path d="M4.2,1.4 H19.8 Q20.9,1.4 21,2.5 L21.9,21 H2.1 L3,2.5 Q3.1,1.4 4.2,1.4 Z" fill="url(#edg11)"/><path d="M0.6,21.6 H23.4 V24 Q23.4,25.4 22,25.4 H2 Q0.6,25.4 0.6,24 Z" fill="#9a9792"/><path d="M1.5,22.4 H22.5" stroke="#c9c5bd" stroke-width="0.7"/></svg>
<div class="t r" style="left:531.30px;top:569.77px;font-size:13px;color:#8f8f94;font-weight:400;letter-spacing:0.103px;">Donanım diski</div>
<div class="t r" style="left:655.00px;top:569.77px;font-size:13px;color:#8f8f94;font-weight:400;">USB</div>
<div class="t r" style="left:778.40px;top:569.77px;font-size:13px;color:#8f8f94;font-weight:400;">5 TB</div>
<div style="position:absolute;left:218px;top:671px;width:716px;height:1px;background:#e3e3e5"></div>
<div class="t r" style="left:250.40px;top:683.43px;font-size:12.9px;color:#5b8ddf;font-weight:400;">Disk resmi ekle…</div>
<svg style="position:absolute;left:227.40px;top:684.60px" width="16" height="16" viewBox="0 0 16 16"><circle cx="8" cy="8" r="7.2" fill="none" stroke="#6b93e0" stroke-width="1.1"/><path d="M8,4.3 V11.7 M4.3,8 H11.7" stroke="#6b93e0" stroke-width="1.1" stroke-linecap="round"/></svg>
<div style="position:absolute;left:884.6px;top:682.4px;width:36.2px;height:20.5px;background:#e2e2e4;border-radius:10.25px;box-shadow:inset 0 0 0 0.6px #d2d2d4"></div>
<div style="position:absolute;left:884.6px;top:682.4px;width:20.6px;height:20.5px;background:#ffffff;border-radius:50%;box-shadow:inset 0 0 0 0.8px #cfcfd1"></div>
<div class="t r" style="right:324.00px;top:683.65px;font-size:13.4px;color:#3a3a3e;font-weight:400;">Gizli öğeleri göster</div>
<svg style="position:absolute;left:1020.00px;top:76.50px" width="98" height="100" viewBox="0 0 98 100"><defs><linearGradient id="bgtop" x1="0" y1="0" x2="0" y2="1"><stop offset="0" stop-color="#aeb5bd"/><stop offset="1" stop-color="#c9d0d7"/></linearGradient><linearGradient id="bgbase" x1="0" y1="0" x2="1" y2="0"><stop offset="0" stop-color="#4a4c50"/><stop offset="0.12" stop-color="#8a8d91"/><stop offset="0.22" stop-color="#505256"/><stop offset="0.78" stop-color="#505256"/><stop offset="0.88" stop-color="#8a8d91"/><stop offset="1" stop-color="#4a4c50"/></linearGradient><radialGradient id="bghub" cx="0.5" cy="0.4" r="0.6"><stop offset="0" stop-color="#cfd6dd"/><stop offset="1" stop-color="#b4bcc4"/></radialGradient></defs><path d="M3,81 H95 V91 Q95,97 89,97 H9 Q3,97 3,91 Z" fill="url(#bgbase)"/><path d="M43,82 H72 V96 H43 Z" fill="#3a3b3e"/><rect x="44.5" y="84" width="1.6" height="11" fill="#9a9da1"/><rect x="47.9" y="84" width="1.6" height="11" fill="#9a9da1"/><rect x="51.3" y="84" width="1.6" height="11" fill="#9a9da1"/><rect x="54.7" y="84" width="1.6" height="11" fill="#9a9da1"/><rect x="58.1" y="84" width="1.6" height="11" fill="#9a9da1"/><rect x="61.5" y="84" width="1.6" height="11" fill="#9a9da1"/><rect x="64.9" y="84" width="1.6" height="11" fill="#9a9da1"/><rect x="68.3" y="84" width="1.6" height="11" fill="#9a9da1"/><path d="M14,1.8 H84 Q89.5,1.8 90,7 L95.6,76 Q96,82 90,82 H8 Q2,82 2.4,76 L8,7 Q8.5,1.8 14,1.8 Z" fill="url(#bgtop)" stroke="#9aa1a8" stroke-width="0.8"/><rect x="20.5" y="5" width="42.5" height="13.5" rx="1.5" fill="#c2c8ce" stroke="#8d939a" stroke-width="0.6"/><rect x="22" y="6.5" width="39.5" height="10.5" fill="#3b3d41"/><path d="M24,9 H46 M24,12 H44 M24,14.8 H40" stroke="#6c6f74" stroke-width="0.9"/><path d="M52,15.5 L55.5,9.3 L59,15.5 Z" fill="#f2f2f2"/><path d="M79,6 Q82,42 80,60 Q76,77 55,79 Q30,80 22,62 Q16,46 30,34 Q40,26 63,22.5 L65.5,21 V30" fill="none" stroke="#e4e9ee" stroke-width="1.6"/><path d="M80.5,6 Q83.5,42 81.5,60 Q77.5,78.5 55,80.5 Q29,81.5 20.5,62.5 Q14.5,45.5 29,33 Q39,25 62,21" fill="none" stroke="#8f969d" stroke-width="0.9"/><circle cx="48.5" cy="50.5" r="14.5" fill="url(#bghub)" stroke="#9aa2aa" stroke-width="0.9"/><circle cx="48.5" cy="49.8" r="13.2" fill="none" stroke="#e2e7ec" stroke-width="0.8"/><circle cx="14.4" cy="5.7" r="1.6" fill="#7e858c"/><circle cx="84.3" cy="6.5" r="1.6" fill="#7e858c"/><circle cx="12" cy="39" r="1.6" fill="#7e858c"/><circle cx="87.5" cy="39.8" r="1.6" fill="#7e858c"/><circle cx="8.7" cy="77.2" r="1.6" fill="#7e858c"/><circle cx="90" cy="77.2" r="1.6" fill="#7e858c"/></svg>
<div class="t" style="left:955.60px;top:195.56px;font-size:14.25px;color:#2b2b2f;font-weight:700;">APPLE SSD AP1024N</div>
<div class="t r" style="left:955.00px;top:216.76px;font-size:13.1px;color:#8a8a8f;font-weight:400;">Donanım diski • 1 TB</div>
<div style="position:absolute;left:956.7px;top:252.2px;width:226px;height:27.6px;background:linear-gradient(#3e87f6,#2f74ea);border-radius:6px"></div>
<div class="t r" style="left:769.70px;width:600px;text-align:center;top:256.76px;font-size:13.1px;color:#ffffff;font-weight:400;">Kayıp verileri ara</div>
<div style="position:absolute;left:955.8px;top:298.6px;width:228.5px;height:54.3px;background:#e1e0e5;border-radius:8px"></div>
<div class="t r" style="left:967.10px;top:307.47px;font-size:12.5px;color:#3a3a3e;font-weight:400;">10.09.24 - APPLE SSD AP1…</div>
<svg style="position:absolute;left:1156.00px;top:319.50px" width="15" height="12" viewBox="0 0 15 12"><path d="M0.8,6 H14 M9,1 L14,6 L9,11" fill="none" stroke="#a0a0a4" stroke-width="1.2" stroke-linecap="round" stroke-linejoin="round"/></svg>
<div class="t r" style="left:966.50px;top:323.90px;font-size:12.4px;color:#8a8a8f;font-weight:400;">Son Tarama: 4 hours önce</div>
<div class="t" style="left:962.00px;top:377.09px;font-size:13px;color:#2b2b2f;font-weight:700;">Genel</div>
<svg style="position:absolute;left:948.00px;top:383.80px" width="10" height="7" viewBox="0 0 10 7"><path d="M1.2,1.2 L5,5.2 L8.8,1.2" fill="none" stroke="#6a6a6e" stroke-width="1.2" stroke-linecap="round" stroke-linejoin="round"/></svg>
<div class="t r" style="left:953.30px;top:400.20px;font-size:12.1px;color:#9a9a9f;font-weight:400;">Tür:</div>
<div class="t r" style="right:13.50px;top:400.20px;font-size:12.1px;color:#3f3f43;font-weight:400;">Donanım diski</div>
<div class="t r" style="left:953.30px;top:422.80px;font-size:12.1px;color:#9a9a9f;font-weight:400;">Cihaz modeli:</div>
<div class="t r" style="right:13.50px;top:422.80px;font-size:12.1px;color:#3f3f43;font-weight:400;">APPLE SSD AP102…</div>
<div class="t r" style="left:953.30px;top:445.40px;font-size:12.1px;color:#9a9a9f;font-weight:400;">Protokol:</div>
<div class="t r" style="right:13.50px;top:445.40px;font-size:12.1px;color:#3f3f43;font-weight:400;">PCI-Express</div>
<div class="t r" style="left:953.30px;top:468.00px;font-size:12.1px;color:#9a9a9f;font-weight:400;">Revizyon:</div>
<div class="t r" style="right:13.50px;top:468.00px;font-size:12.1px;color:#3f3f43;font-weight:400;">1307</div>
<div class="t r" style="left:953.30px;top:490.60px;font-size:12.1px;color:#9a9a9f;font-weight:400;">Medya boyt:</div>
<div class="t r" style="right:13.50px;top:490.60px;font-size:12.1px;color:#3f3f43;font-weight:400;">1 TB</div>
<div class="t r" style="left:953.30px;top:513.20px;font-size:12.1px;color:#9a9a9f;font-weight:400;">BSD adı:</div>
<div class="t r" style="right:13.50px;top:513.20px;font-size:12.1px;color:#3f3f43;font-weight:400;">disk0</div>
<div class="t r" style="left:953.30px;top:535.80px;font-size:12.1px;color:#9a9a9f;font-weight:400;">Bölümler:</div>
<div class="t r" style="right:13.50px;top:535.80px;font-size:12.1px;color:#3f3f43;font-weight:400;">2</div>
<div class="t r" style="left:953.30px;top:558.40px;font-size:12.1px;color:#9a9a9f;font-weight:400;">Kapasite:</div>
<div class="t r" style="right:13.50px;top:558.40px;font-size:12.1px;color:#3f3f43;font-weight:400;">1 TB</div>
<div class="t r" style="left:953.30px;top:581.00px;font-size:12.1px;color:#9a9a9f;font-weight:400;">Boşta:</div>
<div class="t r" style="right:13.50px;top:581.00px;font-size:12.1px;color:#3f3f43;font-weight:400;">575,52 GB</div>
<div class="t" style="left:961.70px;top:606.35px;font-size:13.4px;color:#2b2b2f;font-weight:700;">Çocuk 'Macintosh HD'</div>
<svg style="position:absolute;left:950.50px;top:612.50px" width="7" height="9" viewBox="0 0 7 9"><path d="M1.5,1 L5,4.5 L1.5,8" fill="none" stroke="#6a6a6e" stroke-width="1.3" stroke-linecap="round" stroke-linejoin="round"/></svg>
</body></html>
